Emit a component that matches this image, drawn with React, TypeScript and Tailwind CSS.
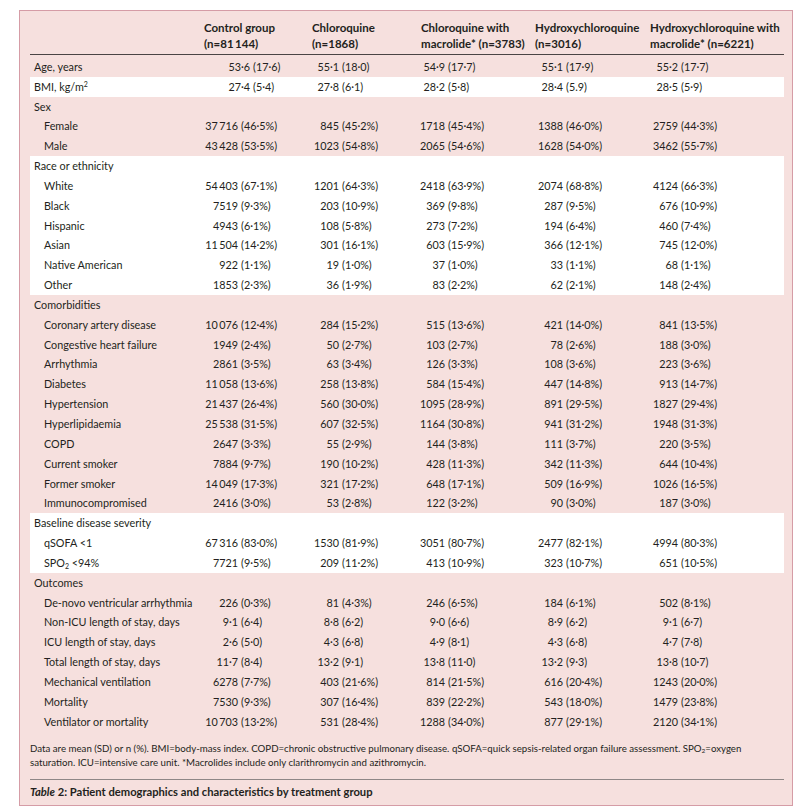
import React from 'react'

type Row =
  | { kind: 'head'; label: React.ReactNode; white?: boolean }
  | { kind: 'val'; label: React.ReactNode; values: string[]; sub?: boolean; white?: boolean; shift?: boolean }

const T = '\u2009'

const rows: Row[] = [
  { kind: 'val', label: 'Age, years', values: ['53·6 (17·6)', '55·1 (18·0)', '54·9 (17·7)', '55·1 (17·9)', '55·2 (17·7)'], shift: true },
  {
    kind: 'val',
    label: (
      <>
        BMI, kg/m<sup className="text-[7px] -top-[4px]">2</sup>
      </>
    ),
    values: ['27·4 (5·4)', '27·8 (6·1)', '28·2 (5·8)', '28·4 (5.9)', '28·5 (5·9)'],
    white: true,
    shift: true,
  },
  { kind: 'head', label: 'Sex' },
  { kind: 'val', sub: true, label: 'Female', values: [`37${T}716 (46·5%)`, '845 (45·2%)', '1718 (45·4%)', '1388 (46·0%)', '2759 (44·3%)'] },
  { kind: 'val', sub: true, label: 'Male', values: [`43${T}428 (53·5%)`, '1023 (54·8%)', '2065 (54·6%)', '1628 (54·0%)', '3462 (55·7%)'] },
  { kind: 'head', label: 'Race or ethnicity', white: true },
  { kind: 'val', sub: true, white: true, label: 'White', values: [`54${T}403 (67·1%)`, '1201 (64·3%)', '2418 (63·9%)', '2074 (68·8%)', '4124 (66·3%)'] },
  { kind: 'val', sub: true, white: true, label: 'Black', values: ['7519 (9·3%)', '203 (10·9%)', '369 (9·8%)', '287 (9·5%)', '676 (10·9%)'] },
  { kind: 'val', sub: true, white: true, label: 'Hispanic', values: ['4943 (6·1%)', '108 (5·8%)', '273 (7·2%)', '194 (6·4%)', '460 (7·4%)'] },
  { kind: 'val', sub: true, white: true, label: 'Asian', values: [`11${T}504 (14·2%)`, '301 (16·1%)', '603 (15·9%)', '366 (12·1%)', '745 (12·0%)'] },
  { kind: 'val', sub: true, white: true, label: 'Native American', values: ['922 (1·1%)', '19 (1·0%)', '37 (1·0%)', '33 (1·1%)', '68 (1·1%)'] },
  { kind: 'val', sub: true, white: true, label: 'Other', values: ['1853 (2·3%)', '36 (1·9%)', '83 (2·2%)', '62 (2·1%)', '148 (2·4%)'] },
  { kind: 'head', label: 'Comorbidities' },
  { kind: 'val', sub: true, label: 'Coronary artery disease', values: [`10${T}076 (12·4%)`, '284 (15·2%)', '515 (13·6%)', '421 (14·0%)', '841 (13·5%)'] },
  { kind: 'val', sub: true, label: 'Congestive heart failure', values: ['1949 (2·4%)', '50 (2·7%)', '103 (2·7%)', '78 (2·6%)', '188 (3·0%)'] },
  { kind: 'val', sub: true, label: 'Arrhythmia', values: ['2861 (3·5%)', '63 (3·4%)', '126 (3·3%)', '108 (3·6%)', '223 (3·6%)'] },
  { kind: 'val', sub: true, label: 'Diabetes', values: [`11${T}058 (13·6%)`, '258 (13·8%)', '584 (15·4%)', '447 (14·8%)', '913 (14·7%)'] },
  { kind: 'val', sub: true, label: 'Hypertension', values: [`21${T}437 (26·4%)`, '560 (30·0%)', '1095 (28·9%)', '891 (29·5%)', '1827 (29·4%)'] },
  { kind: 'val', sub: true, label: 'Hyperlipidaemia', values: [`25${T}538 (31·5%)`, '607 (32·5%)', '1164 (30·8%)', '941 (31·2%)', '1948 (31·3%)'] },
  { kind: 'val', sub: true, label: 'COPD', values: ['2647 (3·3%)', '55 (2·9%)', '144 (3·8%)', '111 (3·7%)', '220 (3·5%)'] },
  { kind: 'val', sub: true, label: 'Current smoker', values: ['7884 (9·7%)', '190 (10·2%)', '428 (11·3%)', '342 (11·3%)', '644 (10·4%)'] },
  { kind: 'val', sub: true, label: 'Former smoker', values: [`14${T}049 (17·3%)`, '321 (17·2%)', '648 (17·1%)', '509 (16·9%)', '1026 (16·5%)'] },
  { kind: 'val', sub: true, label: 'Immunocompromised', values: ['2416 (3·0%)', '53 (2·8%)', '122 (3·2%)', '90 (3·0%)', '187 (3·0%)'] },
  { kind: 'head', label: 'Baseline disease severity', white: true },
  { kind: 'val', sub: true, white: true, label: 'qSOFA <1', values: [`67${T}316 (83·0%)`, '1530 (81·9%)', '3051 (80·7%)', '2477 (82·1%)', '4994 (80·3%)'] },
  {
    kind: 'val',
    sub: true,
    white: true,
    label: (
      <>
        SPO<sub className="text-[7px]">2</sub> &lt;94%
      </>
    ),
    values: ['7721 (9·5%)', '209 (11·2%)', '413 (10·9%)', '323 (10·7%)', '651 (10·5%)'],
  },
  { kind: 'head', label: 'Outcomes' },
  { kind: 'val', sub: true, label: 'De-novo ventricular arrhythmia', values: ['226 (0·3%)', '81 (4·3%)', '246 (6·5%)', '184 (6·1%)', '502 (8·1%)'] },
  { kind: 'val', sub: true, label: 'Non-ICU length of stay, days', values: ['9·1 (6·4)', '8·8 (6·2)', '9·0 (6·6)', '8·9 (6·2)', '9·1 (6·7)'] },
  { kind: 'val', sub: true, label: 'ICU length of stay, days', values: ['2·6 (5·0)', '4·3 (6·8)', '4·9 (8·1)', '4·3 (6·8)', '4·7 (7·8)'] },
  { kind: 'val', sub: true, label: 'Total length of stay, days', values: ['11·7 (8·4)', '13·2 (9·1)', '13·8 (11·0)', '13·2 (9·3)', '13·8 (10·7)'] },
  { kind: 'val', sub: true, label: 'Mechanical ventilation', values: ['6278 (7·7%)', '403 (21·6%)', '814 (21·5%)', '616 (20·4%)', '1243 (20·0%)'] },
  { kind: 'val', sub: true, label: 'Mortality', values: ['7530 (9·3%)', '307 (16·4%)', '839 (22·2%)', '543 (18·0%)', '1479 (23·8%)'] },
  { kind: 'val', sub: true, label: 'Ventilator or mortality', values: [`10${T}703 (13·2%)`, '531 (28·4%)', '1288 (34·0%)', '877 (29·1%)', '2120 (34·1%)'] },
]

// width of the right-aligned count box in each column
const leftBox = ['w-[38px]', 'w-[31px]', 'w-[28px]', 'w-[32px]', 'w-[32px]']

const grid = 'grid grid-cols-[170px_108px_109px_114px_115px_138px]'

function Cell({ value, col, shift }: { value: string; col: number; shift?: boolean }) {
  const i = value.indexOf(' (')
  const a = value.slice(0, i)
  const b = value.slice(i + 1)
  return (
    <div className="flex items-center whitespace-nowrap">
      <span className={`${shift && col === 0 ? 'w-[50px]' : leftBox[col]} shrink-0 text-right`}>{a}</span>
      <span className="pl-[3px]">{b}</span>
    </div>
  )
}

export default function App() {
  return (
    <div className="w-[800px] h-[812px] bg-white pt-[10px] pl-[19px] font-['Lato',sans-serif] text-[#231f20]">
      <div className="w-[774px] border border-[#d59ca6] bg-[#f6e0de] pl-[10px] pr-[8px] pt-[9px] pb-[5px]">
        <div className={`${grid} text-[11.5px] font-bold leading-[16px] pb-[2px] border-b border-[#4a4444]`}>
          <div />
          <div className="pl-1">Control group<br />(n=81{T}144)</div>
          <div className="pl-1">Chloroquine<br />(n=1868)</div>
          <div className="pl-1">Chloroquine with<br />macrolide* (n=3783)</div>
          <div className="pl-1">Hydroxychloroquine<br />(n=3016)</div>
          <div className="pl-1">Hydroxychloroquine with<br />macrolide* (n=6221)</div>
        </div>

        <div className="pt-[2px] text-[10.8px]">
          {rows.map((r, idx) => (
            <div key={idx} className={`${grid} h-[19.85px] items-center ${r.white ? 'bg-white' : ''}`}>
              <div className={r.kind === 'val' && r.sub ? 'pl-[14px]' : 'pl-1'}>{r.label}</div>
              {r.kind === 'val' &&
                r.values.map((v, c) => <Cell key={c} value={v} col={c} shift={r.shift} />)}
            </div>
          ))}
        </div>

        <p className="mt-[9px] text-[9.7px] leading-[14px] whitespace-nowrap">
          Data are mean (SD) or n (%). BMI=body-mass index. COPD=chronic obstructive pulmonary disease. qSOFA=quick
          sepsis-related organ failure assessment. SPO<sub className="text-[6.5px]">2</sub>=oxygen
          <br />
          saturation. ICU=intensive care unit. *Macrolides include only clarithromycin and azithromycin.
        </p>

        <div className="mt-[10px] border-t border-[#8f8787] pt-[4px] text-[11.2px] leading-[16px] font-bold">
          <span className="italic">Table</span> 2: Patient demographics and characteristics by treatment group
        </div>
      </div>
    </div>
  )
}
